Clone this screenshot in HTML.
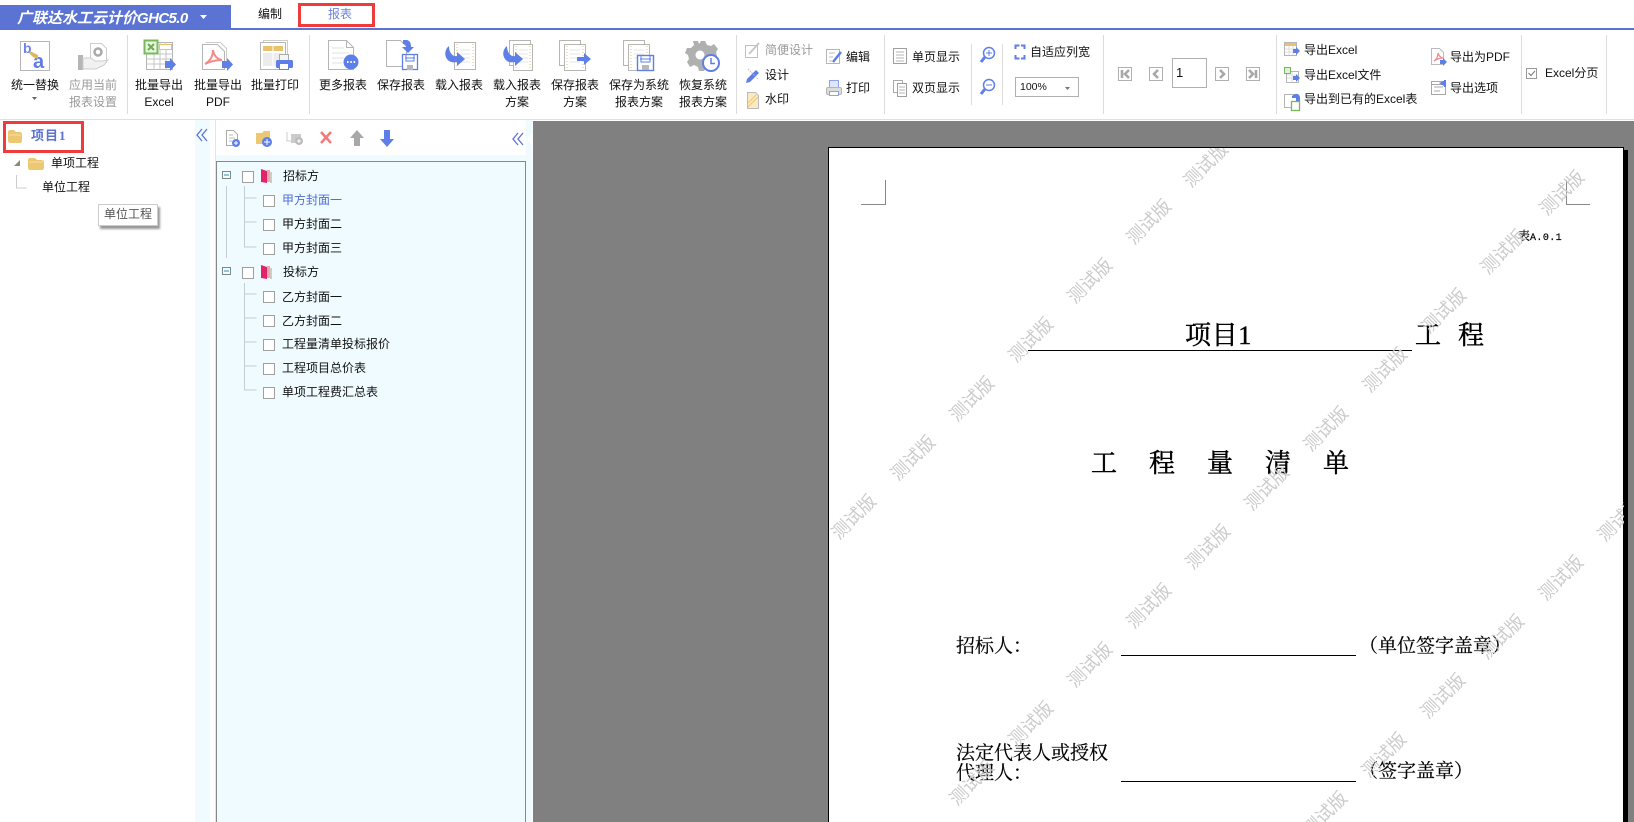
<!DOCTYPE html>
<html lang="zh-CN"><head><meta charset="utf-8"><title>广联达水工云计价GHC5.0</title>
<style>
html,body{margin:0;padding:0;width:1634px;height:822px;overflow:hidden;background:#fff}
body{position:relative;font:12px/16px "Liberation Sans","Noto Sans CJK SC",sans-serif;color:#111}
.b{position:absolute}
.t{position:absolute;white-space:nowrap;line-height:16px}
.c{position:absolute;white-space:nowrap;line-height:16px;transform:translateX(-50%);text-align:center}
.g{color:#9a9a9a}
.sep{position:absolute;width:1px;background:#dcdcdc}
.s{position:absolute;white-space:nowrap;font-family:"Liberation Serif","Noto Serif CJK SC",serif;color:#000;line-height:1;-webkit-text-stroke:.2px #000}
.h{-webkit-text-stroke:.45px #000}
svg{position:absolute;left:0;top:0}
</style></head><body>
<div class="b" style="left:0;top:5px;width:231px;height:23px;background:#5b74d3"></div>
<div class="b" style="left:0;top:28px;width:1634px;height:2px;background:#5b74d3"></div>
<div class="t" style="left:17px;top:10px;color:#fff;font-size:15px;font-weight:bold;font-style:italic;line-height:18px">广联达水工云计价<span style="letter-spacing:-.6px">GHC5.0</span></div>
<div class="c" style="left:270px;top:6px">编制</div>
<div class="b" style="left:298px;top:3px;width:71px;height:18px;border:3px solid #ee3b3b;background:#fff"></div>
<div class="c" style="left:340px;top:6px;color:#6a80e0">报表</div>

<div class="b" style="left:0;top:119px;width:1634px;height:1px;background:#e0e0e0"></div>
<div class="sep" style="left:127px;top:35px;height:79px"></div>
<div class="sep" style="left:309px;top:35px;height:79px"></div>
<div class="sep" style="left:736px;top:35px;height:79px"></div>
<div class="sep" style="left:884px;top:35px;height:79px"></div>
<div class="sep" style="left:971px;top:44px;height:61px"></div>
<div class="sep" style="left:1002px;top:44px;height:61px"></div>
<div class="sep" style="left:1103px;top:35px;height:79px"></div>
<div class="sep" style="left:1276px;top:35px;height:79px"></div>
<div class="sep" style="left:1521px;top:35px;height:79px"></div>
<div class="sep" style="left:1606px;top:35px;height:79px"></div>

<div class="c" style="left:35px;top:77px">统一替换</div>
<div class="c g" style="left:93px;top:77px">应用当前</div><div class="c g" style="left:93px;top:94px">报表设置</div>
<div class="c" style="left:159px;top:77px">批量导出</div><div class="c" style="left:159px;top:94px">Excel</div>
<div class="c" style="left:218px;top:77px">批量导出</div><div class="c" style="left:218px;top:94px">PDF</div>
<div class="c" style="left:275px;top:77px">批量打印</div>
<div class="c" style="left:343px;top:77px">更多报表</div>
<div class="c" style="left:401px;top:77px">保存报表</div>
<div class="c" style="left:459px;top:77px">载入报表</div>
<div class="c" style="left:517px;top:77px">载入报表</div><div class="c" style="left:517px;top:94px">方案</div>
<div class="c" style="left:575px;top:77px">保存报表</div><div class="c" style="left:575px;top:94px">方案</div>
<div class="c" style="left:639px;top:77px">保存为系统</div><div class="c" style="left:639px;top:94px">报表方案</div>
<div class="c" style="left:703px;top:77px">恢复系统</div><div class="c" style="left:703px;top:94px">报表方案</div>
<div class="t g" style="left:765px;top:42px">简便设计</div>
<div class="t" style="left:765px;top:67px">设计</div>
<div class="t" style="left:765px;top:91px">水印</div>
<div class="t" style="left:846px;top:49px">编辑</div>
<div class="t" style="left:846px;top:80px">打印</div>
<div class="t" style="left:912px;top:49px">单页显示</div>
<div class="t" style="left:912px;top:80px">双页显示</div>
<div class="t" style="left:1030px;top:44px">自适应列宽</div>
<div class="b" style="left:1015px;top:77px;width:62px;height:18px;border:1px solid #b0b0b0"></div>
<div class="t" style="left:1020px;top:79px;font-size:10.500px">100%</div>
<div class="b" style="left:1172px;top:58px;width:33px;height:28px;border:1px solid #b0b0b0"></div>
<div class="t" style="left:1176px;top:65px;font-size:13px">1</div>
<div class="t" style="left:1304px;top:42px">导出Excel</div>
<div class="t" style="left:1304px;top:67px">导出Excel文件</div>
<div class="t" style="left:1304px;top:91px">导出到已有的Excel表</div>
<div class="t" style="left:1450px;top:49px">导出为PDF</div>
<div class="t" style="left:1450px;top:80px">导出选项</div>
<div class="t" style="left:1545px;top:65px">Excel分页</div>

<div class="b" style="left:195px;top:120px;width:15px;height:702px;background:#f0fbff"></div>
<div class="b" style="left:215px;top:120px;width:1px;height:702px;background:#e4e4e4"></div>
<div class="b" style="left:216px;top:155px;width:316px;height:667px;background:#f0fbff"></div>
<div class="b" style="left:526px;top:120px;width:6px;height:35px;background:#f0fbff"></div>
<div class="b" style="left:216px;top:161px;width:308px;height:660px;border:1px solid #888;border-bottom:none;background:#f0fbff"></div>
<div class="b" style="left:3px;top:121px;width:75px;height:26px;border:3px solid #ee3b3b"></div>
<div class="t" style="left:31px;top:128px;color:#5b74d3;font-weight:bold;font-family:'Liberation Serif','Noto Sans CJK SC',serif;font-size:13px;letter-spacing:1px">项目1</div>
<div class="t" style="left:51px;top:155px">单项工程</div>
<div class="t" style="left:42px;top:179px">单位工程</div>
<div class="b" style="left:98px;top:204px;width:58px;height:20px;background:#fff;border:1px solid #ccc;box-shadow:2px 3px 2px #999"></div>
<div class="t" style="left:104px;top:206px;color:#555">单位工程</div>

<div class="t" style="left:283px;top:168px">招标方</div>
<div class="t" style="left:282px;top:192px;color:#4f6cd8">甲方封面一</div>
<div class="t" style="left:282px;top:216px">甲方封面二</div>
<div class="t" style="left:282px;top:240px">甲方封面三</div>
<div class="t" style="left:283px;top:264px">投标方</div>
<div class="t" style="left:282px;top:289px">乙方封面一</div>
<div class="t" style="left:282px;top:313px">乙方封面二</div>
<div class="t" style="left:282px;top:336px">工程量清单投标报价</div>
<div class="t" style="left:282px;top:360px">工程项目总价表</div>
<div class="t" style="left:282px;top:384px">单项工程费汇总表</div>

<div class="b" style="left:532px;top:120px;width:1px;height:702px;background:#fff"></div>
<div class="b" style="left:533px;top:121px;width:1101px;height:701px;background:#808080"></div>
<div class="b" style="left:828px;top:147px;width:794px;height:674px;border:1px solid #000;border-bottom:none;background:#fff"></div>
<div class="b" style="left:1624px;top:150px;width:4px;height:672px;background:#000"></div>
<div class="b" style="left:861px;top:204px;width:25px;height:1px;background:#888"></div>
<div class="b" style="left:885px;top:180px;width:1px;height:24px;background:#888"></div>
<div class="b" style="left:1566px;top:204px;width:24px;height:1px;background:#888"></div>
<div class="b" style="left:1566px;top:180px;width:1px;height:24px;background:#888"></div>
<div class="s" style="left:1518px;top:230px;font-size:12px">表<span style="font-family:'Liberation Mono',monospace;font-size:10px;letter-spacing:.4px">A.0.1</span></div>
<div class="s h" style="left:1185px;top:323px;font-size:26px;letter-spacing:.6px">项目1</div>
<div class="b" style="left:1028px;top:350px;width:384px;height:1px;background:#000"></div>
<div class="s h" style="left:1415px;top:323px;font-size:26px">工</div>
<div class="s h" style="left:1458px;top:323px;font-size:26px">程</div>
<div class="s h" style="left:1091px;top:451px;font-size:26px">工</div>
<div class="s h" style="left:1149px;top:451px;font-size:26px">程</div>
<div class="s h" style="left:1207px;top:451px;font-size:26px">量</div>
<div class="s h" style="left:1265px;top:451px;font-size:26px">清</div>
<div class="s h" style="left:1323px;top:451px;font-size:26px">单</div>
<div class="s" style="left:956px;top:637px;font-size:19px">招标人：</div>
<div class="b" style="left:1121px;top:655px;width:235px;height:1px;background:#000"></div>
<div class="s" style="left:1359px;top:637px;font-size:19px">（单位签字盖章）</div>
<div class="s" style="left:956px;top:744px;font-size:19px">法定代表人或授权</div>
<div class="s" style="left:956px;top:764px;font-size:19px">代理人：</div>
<div class="b" style="left:1121px;top:781px;width:235px;height:1px;background:#000"></div>
<div class="s" style="left:1359px;top:762px;font-size:19px">（签字盖章）</div>

<svg width="1634" height="822" viewBox="0 0 1634 822" fill="none">
<defs><clipPath id="pg"><rect x="829" y="148" width="795" height="674"/></clipPath></defs>
<path d="M200 15l7 0-3.500 4z" fill="#fff"/>
<path d="M32 97h5l-2.500 3z" fill="#666"/>
<!-- replace -->
<rect x="20.500" y="41.500" width="29" height="29" fill="#fff" stroke="#b5b5b5"/>
<text x="23" y="53" font-family="Liberation Sans" font-weight="bold" font-size="14" fill="#6a84ea">b</text>
<text x="33" y="68" font-family="Liberation Sans" font-weight="bold" font-size="20" fill="#5f7be6">a</text>
<path d="M30 51l8 4v4l-5-2-4-4z" fill="#e3b45f"/>
<!-- apply -->
<path d="M90.500 43.500h11l5 5v14h-16z" fill="#fff" stroke="#ccc"/><circle cx="98" cy="52" r="3.500" stroke="#aaa" stroke-width="2.500"/>
<rect x="78" y="55" width="5" height="15" fill="#b5b5b5"/><path d="M83 58h8l4 3h8l5-1-4 5-8 4h-13z" fill="#f1f1f1" stroke="#ccc"/>
<!-- excel -->
<rect x="146.500" y="42.500" width="26" height="27" fill="#fff" stroke="#b5b5b5"/>
<path d="M147 54h26M147 59h26M147 64h26M154 42v28M160 42v28M166 42v28" stroke="#c4c4c4"/>
<rect x="159.500" y="44.500" width="12" height="5" fill="#fff" stroke="#e8c26c"/>
<rect x="144.500" y="40.500" width="13" height="13" fill="#eaf5e4" stroke="#7ab85c" stroke-width="2"/>
<path d="M148 44l6 6M154 44l-6 6" stroke="#6fae50" stroke-width="2"/>
<path d="M165 61h5v-3l6 6.500-6 6.500v-3h-5z" fill="#5f7fe8"/>
<!-- pdf -->
<path d="M205.500 42.500h15l6 6v17" stroke="#ccc"/><path d="M202.500 44.500h15l7 7v18h-22z" fill="#fff" stroke="#b5b5b5"/>
<path d="M205 64c5-3 8-8 8-14 1 6 4 9 9 10-6 0-11 1-17 4z" stroke="#f28b8b" stroke-width="2"/>
<path d="M222 61h5v-3l6 6.500-6 6.500v-3h-5z" fill="#5f7fe8"/>
<!-- print -->
<rect x="263.500" y="40.500" width="24" height="26" fill="#fff" stroke="#ccc"/><rect x="260.500" y="42.500" width="25" height="27" fill="#fff" stroke="#b5b5b5"/>
<rect x="263" y="46" width="20" height="5" fill="#e8c26c"/><rect x="263" y="53" width="20" height="13" fill="#ececec"/><path d="M273 46v20" stroke="#fff"/>
<rect x="279.500" y="54.500" width="9" height="6" fill="#f5f5f5" stroke="#aaa"/><rect x="276" y="60" width="17" height="8" rx="1.500" fill="#5f7fe8"/><rect x="279.500" y="63.500" width="9" height="6" fill="#fff" stroke="#5f7fe8"/>
<!-- more -->
<path d="M328.500 40.500h18l7 7v22h-25z" fill="#fff" stroke="#b5b5b5"/><path d="M346.500 40.500v7h7" stroke="#b5b5b5"/><path d="M332 48h12M332 53h17M332 58h12M332 63h10" stroke="#e2e2e2"/>
<circle cx="351" cy="62" r="7.500" fill="#5f7fe8"/><path d="M347 62h1.500M350.300 62h1.500M353.600 62h1.500" stroke="#fff" stroke-width="2"/>
<!-- save -->
<path d="M386.500 40.500h14l6 6v20h-20z" fill="#fff" stroke="#b5b5b5"/>
<path d="M407 40c3 1 4 3 4 7h3l-6 6-6-6h4c0-2-1-3-3-3v-4z" fill="#5f7fe8"/>
<rect x="402.500" y="54.500" width="15" height="15" fill="#fff" stroke="#5f7fe8" stroke-width="1.300"/><path d="M406 55v6h8v-6M405 58h10" stroke="#5f7fe8"/><rect x="407" y="65" width="6" height="5" fill="#b8b8b8"/>
<!-- load -->
<rect x="454.500" y="42.500" width="21" height="27" fill="#fff" stroke="#b5b5b5"/><path d="M457 44v24M473 44v24" stroke="#e8c26c" stroke-dasharray="1 2"/><path d="M460 50h10M460 54h10M460 58h10M460 62h10" stroke="#e4e4e4"/>
<path d="M449 46c-4 3-5 9-2 13 2 3 6 4 10 3v4l8-7-8-7v4c-4 1-8-3-8-10z" fill="#5f7fe8"/>
<!-- load scheme -->
<rect x="509.500" y="40.500" width="21" height="25" fill="#fff" stroke="#b5b5b5"/>
<rect x="513.500" y="44.500" width="19" height="26" fill="#fff" stroke="#b5b5b5"/><path d="M516 46v23M530 46v23" stroke="#e8c26c" stroke-dasharray="1 2"/><path d="M519 50h9M519 54h9M519 58h9M519 62h9" stroke="#e4e4e4"/>
<path d="M507 46c-4 3-5 9-2 13 2 3 6 4 10 3v4l8-7-8-7v4c-4 1-8-3-8-10z" fill="#5f7fe8"/>
<!-- save scheme -->
<rect x="559.500" y="40.500" width="21" height="25" fill="#fff" stroke="#b5b5b5"/>
<rect x="564.500" y="44.500" width="21" height="26" fill="#fff" stroke="#b5b5b5"/><path d="M567 46v23M583 46v23" stroke="#e8c26c" stroke-dasharray="1 2"/><path d="M570 50h10M570 54h10M570 58h10M570 62h10" stroke="#e4e4e4"/>
<path d="M577 57h7v-4l7 6-7 6v-4h-7z" fill="#5f7fe8"/>
<!-- saveas scheme -->
<rect x="623.500" y="40.500" width="21" height="25" fill="#fff" stroke="#b5b5b5"/>
<rect x="628.500" y="44.500" width="21" height="26" fill="#fff" stroke="#b5b5b5"/><path d="M631 46v23M647 46v23" stroke="#e8c26c" stroke-dasharray="1 2"/><path d="M634 50h10M634 54h10M634 58h10" stroke="#e4e4e4"/>
<rect x="637.500" y="55.500" width="16" height="15" fill="#fff" stroke="#5f7fe8" stroke-width="1.400"/><path d="M641 56v6h9v-6M640 59h11" stroke="#5f7fe8"/><rect x="642" y="65" width="7" height="5" fill="#b8b8b8"/>
<!-- restore -->
<path d="M701 41l4 0 2 4 4 1 3-2 4 5-2 3c1 3 1 6 0 8l2 3-5 5-3-2-4 2-2 3h-5l-1-4-4-2-4 2-3-5 2-3-1-4-3-2 2-5 4 0 3-3-1-4h5l1 3z" fill="#b0b0b0"/>
<circle cx="700" cy="55" r="4.500" fill="#fff"/>
<circle cx="711" cy="63" r="8" fill="#fff" stroke="#5f7fe8" stroke-width="2"/><path d="M711 58v5.500h4" stroke="#5f7fe8" stroke-width="1.500"/>
<!-- small -->
<rect x="745.500" y="45.500" width="12" height="12" stroke="#c0c0c0" fill="#fff"/><path d="M749 54l10-11" stroke="#c8c8c8" stroke-width="2"/>
<path d="M747 79l9-9 3 3-9 9-4 1z" fill="#5f7fe8"/><path d="M748 69l10 10" stroke="#bbb" stroke-dasharray="1.500 1"/>
<path d="M747.500 92.500h8l3 3v13h-11z" fill="#fbe9c3" stroke="#bbb"/><path d="M748 103l8-8M748 107l10-10" stroke="#eac778"/>
<rect x="826.500" y="49.500" width="13" height="14" fill="#fff" stroke="#b5b5b5"/><path d="M829 53h6M829 57h4M829 61h3" stroke="#bbb"/><path d="M833 62l8-10" stroke="#5f7fe8" stroke-width="2.500"/>
<rect x="829.500" y="80.500" width="9" height="8" fill="#dfe5fb" stroke="#8fa3ea"/><rect x="826.500" y="87.500" width="15" height="7" rx="1.500" fill="#ddd" stroke="#b5b5b5"/><rect x="829.500" y="91.500" width="9" height="4" fill="#fff" stroke="#8fa3ea"/>
<rect x="893.500" y="48.500" width="13" height="15" fill="#fff" stroke="#9e9e9e"/><path d="M896 52h8M896 55h8M896 58h8M896 61h8" stroke="#b5b5b5"/>
<rect x="893.500" y="80.500" width="9" height="12" fill="#fff" stroke="#aaa"/><rect x="897.500" y="83.500" width="9" height="13" fill="#fff" stroke="#9e9e9e"/><path d="M899 87h6M899 90h6M899 93h6" stroke="#b5b5b5"/>
<circle cx="989" cy="53" r="5.500" fill="#fff" stroke="#5f7fe8" stroke-width="1.500"/><path d="M986 53h6M989 50v6" stroke="#5f7fe8"/><path d="M985 57l-4 5" stroke="#5f7fe8" stroke-width="3"/>
<circle cx="989" cy="85" r="5.500" fill="#fff" stroke="#5f7fe8" stroke-width="1.500"/><path d="M986 85h6" stroke="#5f7fe8"/><path d="M985 89l-4 5" stroke="#5f7fe8" stroke-width="3"/>
<path d="M1015.500 49v-3.500h4M1021 45.500h3.500v3.500M1024.500 55v3.500h-3.500M1019.500 58.500h-4v-3.500" stroke="#5f7fe8" stroke-width="2"/>
<path d="M1065 87h5l-2.500 3z" fill="#777"/>
<!-- pager -->
<g stroke="#b0b0b0" fill="#fff"><rect x="1118.500" y="67.500" width="13" height="13"/><rect x="1149.500" y="67.500" width="13" height="13"/><rect x="1215.500" y="67.500" width="13" height="13"/><rect x="1246.500" y="67.500" width="13" height="13"/></g>
<g stroke="#a8a8a8" stroke-width="2.600"><path d="M1122 70v8M1129 70l-4 4 4 4M1158 70l-4 4 4 4M1220 70l4 4-4 4M1256 70v8M1249 70l4 4-4 4"/></g>
<!-- export -->
<rect x="1284.500" y="42.500" width="12" height="13" fill="#fff" stroke="#b5b5b5"/><rect x="1285" y="43" width="11" height="3" fill="#e8c26c"/><path d="M1285 49h11M1285 52h11M1289 46v9M1293 46v9" stroke="#ddd"/><path d="M1293 49h3v-2l4 4-4 4v-2h-3z" fill="#5f7fe8"/>
<rect x="1286.500" y="71.500" width="12" height="11" fill="#fff" stroke="#b5b5b5"/><path d="M1287 75h11M1287 78h11M1292 72v10" stroke="#ddd"/><path d="M1293 76h3v-2l4 4-4 4v-2h-3z" fill="#5f7fe8"/><rect x="1284.500" y="67.500" width="6" height="6" fill="#dff0d6" stroke="#78b85a"/>
<rect x="1284.500" y="94.500" width="12" height="13" fill="#fff" stroke="#b5b5b5"/><path d="M1292 96c4-4 8-2 8 2v3h-4v-3h-4z" fill="#5f7fe8"/><rect x="1291.500" y="101.500" width="8" height="9" fill="#fff" stroke="#78b85a" stroke-width="1.300"/>
<path d="M1431.500 48.500h8l4 4v12h-12z" fill="#fff" stroke="#bbb"/><path d="M1434 61c3-2 4-5 4-8 1 3 3 5 5 5-3 0-6 1-9 3z" stroke="#f28b8b" stroke-width="1.300"/><path d="M1440 60h3v-2l4 4-4 4v-2h-3z" fill="#5f7fe8"/>
<rect x="1431.500" y="84.500" width="14" height="10" fill="#fff" stroke="#a8a8a8"/><rect x="1431.500" y="81.500" width="14" height="13" stroke="#a8a8a8"/><path d="M1434 87h9M1434 91h6" stroke="#a8a8a8"/><path d="M1439 83l5-2v-1h2v7h-2v-1z" fill="#5f7fe8"/>
<rect x="1526.500" y="68.500" width="10" height="10" fill="#fff" stroke="#999"/><path d="M1528.500 73l2.500 2.500 4-4.500" stroke="#777"/>
<!-- collapse arrows -->
<path d="M202 129l-5 6 5 6M207 129l-5 6 5 6" stroke="#5b74d3" stroke-width="1.300"/>
<path d="M518 133l-5 6 5 6M523 133l-5 6 5 6" stroke="#5b74d3" stroke-width="1.300"/>
<path d="M210 129l-5 6 5 6z" fill="#fff"/><path d="M532 133l-5 6 5 6z" fill="#fff"/>
<!-- left tree -->
<path d="M8 132c0-1 1-2 2-2h4l2 2h4c1 0 2 1 2 2v7c0 1-1 2-2 2H10c-1 0-2-1-2-2z" fill="#edc873"/><path d="M9 135h12" stroke="#f6dea6"/>
<path d="M28 160c0-1 1-2 2-2h5l2 2h5c1 0 2 1 2 2v6c0 1-1 2-2 2H30c-1 0-2-1-2-2z" fill="#edc873"/><path d="M29 162h14" stroke="#f6dea6"/>
<path d="M20 160v6h-6z" fill="#888"/>
<path d="M16.500 175v13h10" stroke="#ccc"/>
<!-- panel toolbar -->
<path d="M226.500 130.500h7l4 4v11h-11z" fill="#fff" stroke="#aaa"/><path d="M229 135h4M229 138h6M229 141h3" stroke="#bbb"/><circle cx="236" cy="143" r="4" fill="#5f7fe8"/><path d="M234 143h4M236 141v4" stroke="#fff"/>
<path d="M256 133h6l2-2h6v13h-14z" fill="#edc873"/><circle cx="267" cy="142" r="5" fill="#5f7fe8"/><path d="M264 142h6M267 139v6" stroke="#fff"/>
<path d="M287 132v9h4" stroke="#ccc"/><path d="M291 134h10v9h-10z" fill="#ccc"/><circle cx="299" cy="141" r="4" fill="#bbb"/><path d="M297 141h4M299 139v4" stroke="#fff"/>
<path d="M321 132l10 11M331 132l-10 11" stroke="#f47a7a" stroke-width="2.500"/>
<path d="M357 130l7 8h-4v8h-6v-8h-4z" fill="#a8a8a8"/>
<path d="M384 130h6v9h4l-7 8-7-8h4z" fill="#5f7fe8"/>
<!-- report tree -->
<g fill="#f4fbff" stroke="#7a8a90"><rect x="222.500" y="171.500" width="8" height="7"/><rect x="222.500" y="267.500" width="8" height="7"/></g>
<path d="M224 175h5M224 271h5" stroke="#2f8fb5"/>
<g fill="#fff" stroke="#a0a0a0"><rect x="242.500" y="171.500" width="11" height="11"/><rect x="242.500" y="267.500" width="11" height="11"/>
<rect x="263.500" y="195.500" width="11" height="11"/><rect x="263.500" y="219.500" width="11" height="11"/><rect x="263.500" y="243.500" width="11" height="11"/><rect x="263.500" y="291.500" width="11" height="11"/><rect x="263.500" y="315.500" width="11" height="11"/><rect x="263.500" y="339.500" width="11" height="11"/><rect x="263.500" y="363.500" width="11" height="11"/><rect x="263.500" y="387.500" width="11" height="11"/></g>
<path d="M261 169l6 2v12l-6-1z" fill="#e0246a"/><path d="M267 170h3v12h-3z" fill="#f6a6a6"/><path d="M270 172h2v11h-2z" fill="#ccc"/>
<path d="M261 265l6 2v12l-6-1z" fill="#e0246a"/><path d="M267 266h3v12h-3z" fill="#f6a6a6"/><path d="M270 268h2v11h-2z" fill="#ccc"/>
<path d="M226.500 186v72M244.500 186v61h12M244.500 198h12M244.500 222h12M244.500 283v107h12M244.500 294h12M244.500 318h12M244.500 342h12M244.500 366h12" stroke="#bfcfd2"/>
<!-- watermarks -->
<g clip-path="url(#pg)" font-family="WenQuanYi Zen Hei,Noto Sans CJK SC,sans-serif" font-size="18" fill="#cbcbcb" text-anchor="middle">
<text x="1206" y="171" transform="rotate(-45 1206 165)">测试版</text>
<text x="1149" y="228" transform="rotate(-45 1149 222)">测试版</text>
<text x="1090" y="287" transform="rotate(-45 1090 281)">测试版</text>
<text x="1031" y="346" transform="rotate(-45 1031 340)">测试版</text>
<text x="972" y="405" transform="rotate(-45 972 399)">测试版</text>
<text x="913" y="464" transform="rotate(-45 913 458)">测试版</text>
<text x="854" y="523" transform="rotate(-45 854 517)">测试版</text>
<text x="1562" y="199" transform="rotate(-45 1562 193)">测试版</text>
<text x="1503" y="258" transform="rotate(-45 1503 252)">测试版</text>
<text x="1444" y="317" transform="rotate(-45 1444 311)">测试版</text>
<text x="1385" y="376" transform="rotate(-45 1385 370)">测试版</text>
<text x="1326" y="435" transform="rotate(-45 1326 429)">测试版</text>
<text x="1267" y="494" transform="rotate(-45 1267 488)">测试版</text>
<text x="1208" y="553" transform="rotate(-45 1208 547)">测试版</text>
<text x="1149" y="612" transform="rotate(-45 1149 606)">测试版</text>
<text x="1090" y="671" transform="rotate(-45 1090 665)">测试版</text>
<text x="1031" y="730" transform="rotate(-45 1031 724)">测试版</text>
<text x="972" y="789" transform="rotate(-45 972 783)">测试版</text>
<text x="1620" y="525" transform="rotate(-45 1620 519)">测试版</text>
<text x="1561" y="584" transform="rotate(-45 1561 578)">测试版</text>
<text x="1502" y="643" transform="rotate(-45 1502 637)">测试版</text>
<text x="1443" y="702" transform="rotate(-45 1443 696)">测试版</text>
<text x="1384" y="761" transform="rotate(-45 1384 755)">测试版</text>
<text x="1325" y="820" transform="rotate(-45 1325 814)">测试版</text>
</g>
</svg>
</body></html>
